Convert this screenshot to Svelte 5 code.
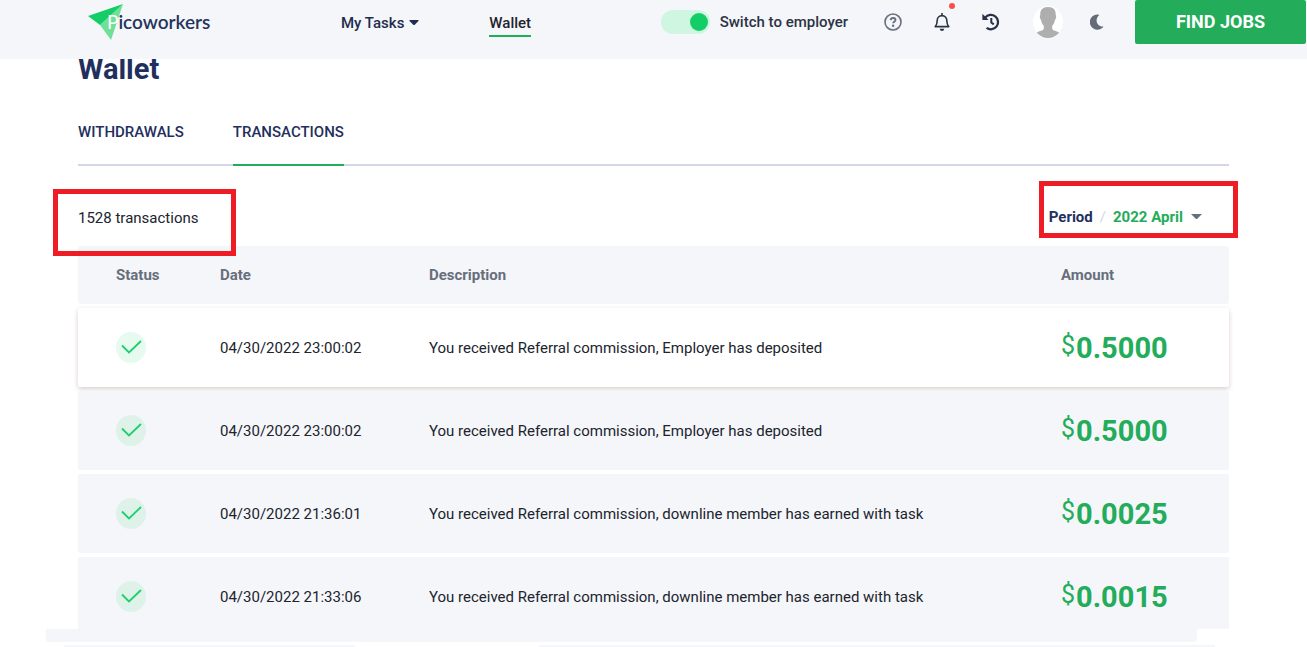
<script>
  let employer = $state(true);
  let period = $state('2022 April');
  const rows = [
    { date: '04/30/2022 23:00:02', text: 'You received Referral commission, Employer has deposited', amount: '0.5000' },
    { date: '04/30/2022 23:00:02', text: 'You received Referral commission, Employer has deposited', amount: '0.5000' },
    { date: '04/30/2022 21:36:01', text: 'You received Referral commission, downline member has earned with task', amount: '0.0025' },
    { date: '04/30/2022 21:33:06', text: 'You received Referral commission, downline member has earned with task', amount: '0.0015' }
  ];
</script>

<header>
  <a class="logo" href="#home">
    <svg width="37" height="38" viewBox="0 0 37 38" aria-hidden="true">
      <path d="M36 1 24 37 13 22Z" fill="#6fe09a" />
      <path d="M1 13 36 1 13 22Z" fill="#13ce66" />
    </svg>
    <span class="brand"><span class="initial">P</span>icoworkers</span>
  </a>
  <nav>
    <button class="menu" type="button">My Tasks
      <svg width="10" height="6" viewBox="0 0 10 6" aria-hidden="true"><path d="M1 0h8q1 0 .5 1L6 4.5q-1 1-2 0L.5 1Q0 0 1 0Z" fill="#1f2d4f" /></svg>
    </button>
    <a class="current" href="#wallet">Wallet</a>
  </nav>
  <div class="tools">
    <label class="switch"><input type="checkbox" role="switch" bind:checked={employer} />Switch to employer</label>
    <button class="icon" type="button" aria-label="Help">
      <svg width="18" height="18" viewBox="0 0 18 18" fill="none" stroke="#676e7c">
        <circle cx="9" cy="9" r="8" stroke-width="1.6" />
        <path d="M6.6 7.1C6.8 5.7 7.8 5 9.1 5c1.4 0 2.4.8 2.4 2 0 1.8-2.3 1.7-2.3 3.3" stroke-width="1.9" />
        <circle cx="9.1" cy="12.8" r="1.2" fill="#676e7c" stroke="none" />
      </svg>
    </button>
    <button class="icon" type="button" aria-label="Notifications">
      <svg width="16" height="18" viewBox="0 0 16 18" fill="none" stroke="#2b3345" stroke-width="1.6">
        <path d="M8 0v2M1.2 13.6h13.6c-1-1.1-2-2-2-6C12.8 4.6 10.7 2.6 8 2.6S3.2 4.6 3.2 7.6c0 4-1 4.900-2 6Z" stroke-linejoin="round" />
        <path d="M5.7 15.7h4.6Q9.9 18 8 18t-2.300-2.300Z" fill="#2b3345" stroke="none" />
      </svg>
      <span class="dot"></span>
    </button>
    <button class="icon history" type="button" aria-label="History">
      <svg width="18" height="18" viewBox="0 0 18 18" fill="none" stroke="#2a3147">
        <path d="M3.2 4.6A7.2 7.2 0 1 1 4.6 14.9" stroke-width="2.3" />
        <path d="M.4.8v6.100h6.200Z" fill="#2a3147" stroke="none" />
        <path d="M9.300 5v4.500l2.500 1.900" stroke-width="2" />
      </svg>
    </button>
    <button class="icon avatar" type="button" aria-label="Profile">
      <svg width="30" height="32" viewBox="0 0 30 32">
        <clipPath id="face"><ellipse cx="15" cy="16" rx="15" ry="16" /></clipPath>
        <g clip-path="url(#face)">
          <path d="M0 0h30v32H0Z" fill="#fff" />
          <path d="M15 1C9.500 1 7 4 7.300 9c-.9.800-.4 4 .8 5 .4 2.800 1.400 4.600 2.700 5.800V23C9.500 25 5 25 3 27.500V32h24v-4.500C25 25 20.500 25 19.200 23v-3.200c1.300-1.200 2.300-3 2.700-5.800 1.200-1 1.700-4.200.8-5C23 4 20.500 1 15 1Z" fill="#aeaeae" />
        </g>
      </svg>
    </button>
    <button class="icon moon" type="button" aria-label="Dark mode">
      <svg width="14" height="16" viewBox="0 0 14 16"><path d="M8 .5A7.600 7.600 0 1 0 13.600 12.500C8 13.500 3.500 6.500 9.200 1Q9.200.5 8 .5Z" fill="#646b79" /></svg>
    </button>
    <a class="find" href="#jobs">FIND JOBS</a>
  </div>
</header>

<main>
  <h1>Wallet</h1>
  <div class="tabs">
    <a href="#withdrawals">WITHDRAWALS</a>
    <a class="active" href="#transactions">TRANSACTIONS</a>
  </div>
  <div class="bar">
    <p class="count">1528 transactions</p>
    <div class="period">
      <label for="period">Period</label><span class="slash">/</span>
      <select id="period" bind:value={period}><option>2022 April</option></select>
      <svg width="11" height="6" viewBox="0 0 11 6" aria-hidden="true"><path d="M0 0h11L6.500 4.500q-1 1-2 0Z" fill="#676e7c" /></svg>
    </div>
  </div>
  <table>
    <thead>
      <tr><th class="status">Status</th><th class="date">Date</th><th>Description</th><th class="amount">Amount</th></tr>
    </thead>
    <tbody>
      {#each rows as row, i}
        <tr class:raised={i === 0}>
          <td class="status">
            <svg width="30" height="31" viewBox="0 0 30 31" role="img" aria-label="Completed">
              <ellipse cx="15" cy="15.500" rx="15" ry="15.500" fill="#13ce66" fill-opacity=".1" />
              <path d="M6 13.500 13 20.500 25 9" fill="none" stroke="#1cd06c" stroke-width="1.800" />
            </svg>
          </td>
          <td>{row.date}</td>
          <td>{row.text}</td>
          <td class="money"><span class="sign">$</span>{row.amount}</td>
        </tr>
      {/each}
    </tbody>
  </table>
  <div class="shelf"></div>
  <div class="pieces"><span></span><span></span></div>
</main>

<style>
  :global(body) { margin: 0; background: #fff; overflow: hidden; }
  :global(#app) { font: 15px/20px Roboto, "Liberation Sans", sans-serif; color: #20242d; }
  a { color: inherit; text-decoration: none; }
  button, select { font: inherit; color: inherit; background: none; border: 0; padding: 0; margin: 0; }
  svg { display: block; flex: none; }

  header { position: relative; z-index: 1; display: flex; align-items: flex-start; box-sizing: border-box; height: 59px; padding: 0 1px 0 87px; background: #f5f6fa; }
  .logo { display: flex; align-items: flex-start; padding-top: 3px; width: 125px; }
  .brand { margin: 9px 0 0 -17px; font: 600 19px/20px Lato, sans-serif; color: #24335a; }
  .initial { color: #fff; font-weight: 400; }
  nav { display: flex; gap: 70px; margin-left: 129px; padding-top: 13px; font-weight: 500; color: #1f2d4f; }
  .menu { display: flex; align-items: center; gap: 5px; height: 20px; }
  .current { color: #20242d; padding-bottom: 2px; border-bottom: 2px solid #23ac5a; }
  .tools { display: flex; align-items: center; height: 44px; margin-left: auto; }
  .switch { display: flex; align-items: center; gap: 10px; margin-right: 36px; color: #2b3345; font-weight: 500; white-space: nowrap; }
  .switch input { appearance: none; display: flex; align-items: center; box-sizing: border-box; width: 49px; height: 24px; margin: 0; padding: 0 2px; border-radius: 12px; background: #cff6e0; }
  .switch input::before { content: ""; width: 18px; height: 18px; border-radius: 50%; background: #13ce66; }
  .switch input:checked::before { margin-left: auto; }
  .icon { display: flex; position: relative; margin-right: 32px; }
  .history { margin-right: 33px; }
  .avatar { margin-right: 27px; }
  .moon { margin-right: 31px; }
  .dot { position: absolute; right: -5px; top: -10px; width: 6px; height: 6px; border-radius: 50%; background: #ff4d4f; }
  .find { width: 171px; border-radius: 2px; background: #23ac5a; color: #fff; font-weight: 700; font-size: 18px; line-height: 44px; text-align: center; }

  main { padding: 0 78px; }
  h1 { margin: 0; font-size: 29px; line-height: 20px; font-weight: 700; color: #1f305e; }
  .tabs { display: flex; gap: 49px; margin-top: 43px; border-bottom: 2px solid #d4d7e6; color: #1f305e; font-weight: 500; }
  .tabs a { padding-bottom: 22px; margin-bottom: -2px; border-bottom: 2px solid transparent; }
  .tabs .active { border-color: #23ac5a; }
  .bar { display: flex; justify-content: space-between; align-items: center; height: 80px; }
  .count, .period { position: relative; margin: 24px 0 0; }
  .count::after, .period::after { content: ""; position: absolute; border: 5px solid #ee1c25; pointer-events: none; }
  .count::after { inset: -19px -38px -28px -25px; }
  .period { display: flex; align-items: center; margin: 22px 27px 0 0; color: #1f305e; font-weight: 700; }
  .period::after { inset: -26px -36px -11px -10px; }
  .slash { margin: 0 7px; color: #d4d7e0; font-weight: 400; }
  .period select { appearance: none; height: 20px; margin-right: 8px; color: #23ac5a; }

  table { width: 100%; border-spacing: 0 4px; margin: -4px 0; table-layout: fixed; }
  th, td { height: 79px; padding: 0; text-align: left; background: #f5f6fa; }
  th { height: 58px; color: #676e7c; font-weight: 700; }
  tr > :first-child { border-radius: 3px 0 0 3px; }
  tr > :last-child { border-radius: 0 3px 3px 0; }
  th.status { width: 104px; }
  .status { padding-left: 38px; }
  th.date { width: 209px; }
  th.amount { width: 168px; }
  .raised { box-shadow: 0 2px 5px rgb(90 30 20 / 22%); border-radius: 3px; }
  .raised td { background: #fff; }
  tbody tr:last-child td { height: 65px; padding-top: 7px; }
  tbody tr:last-child > td { border-radius: 0; }
  .money { color: #23ac5a; font-size: 29px; font-weight: 700; line-height: 34px; }
  .sign { display: inline-block; margin-right: 1px; font-size: 25px; font-weight: 400; line-height: 25px; vertical-align: 4px; }
  .shelf { height: 13px; margin: 0 32px 0 -32px; border-radius: 0 0 3px 3px; background: #f5f6fa; }
  .pieces { display: grid; grid-template-columns: 291fr 677fr; gap: 184px; margin: 3px 14px 0 -14px; }
  .pieces span { height: 2px; background: #f5f6fa; }
</style>
